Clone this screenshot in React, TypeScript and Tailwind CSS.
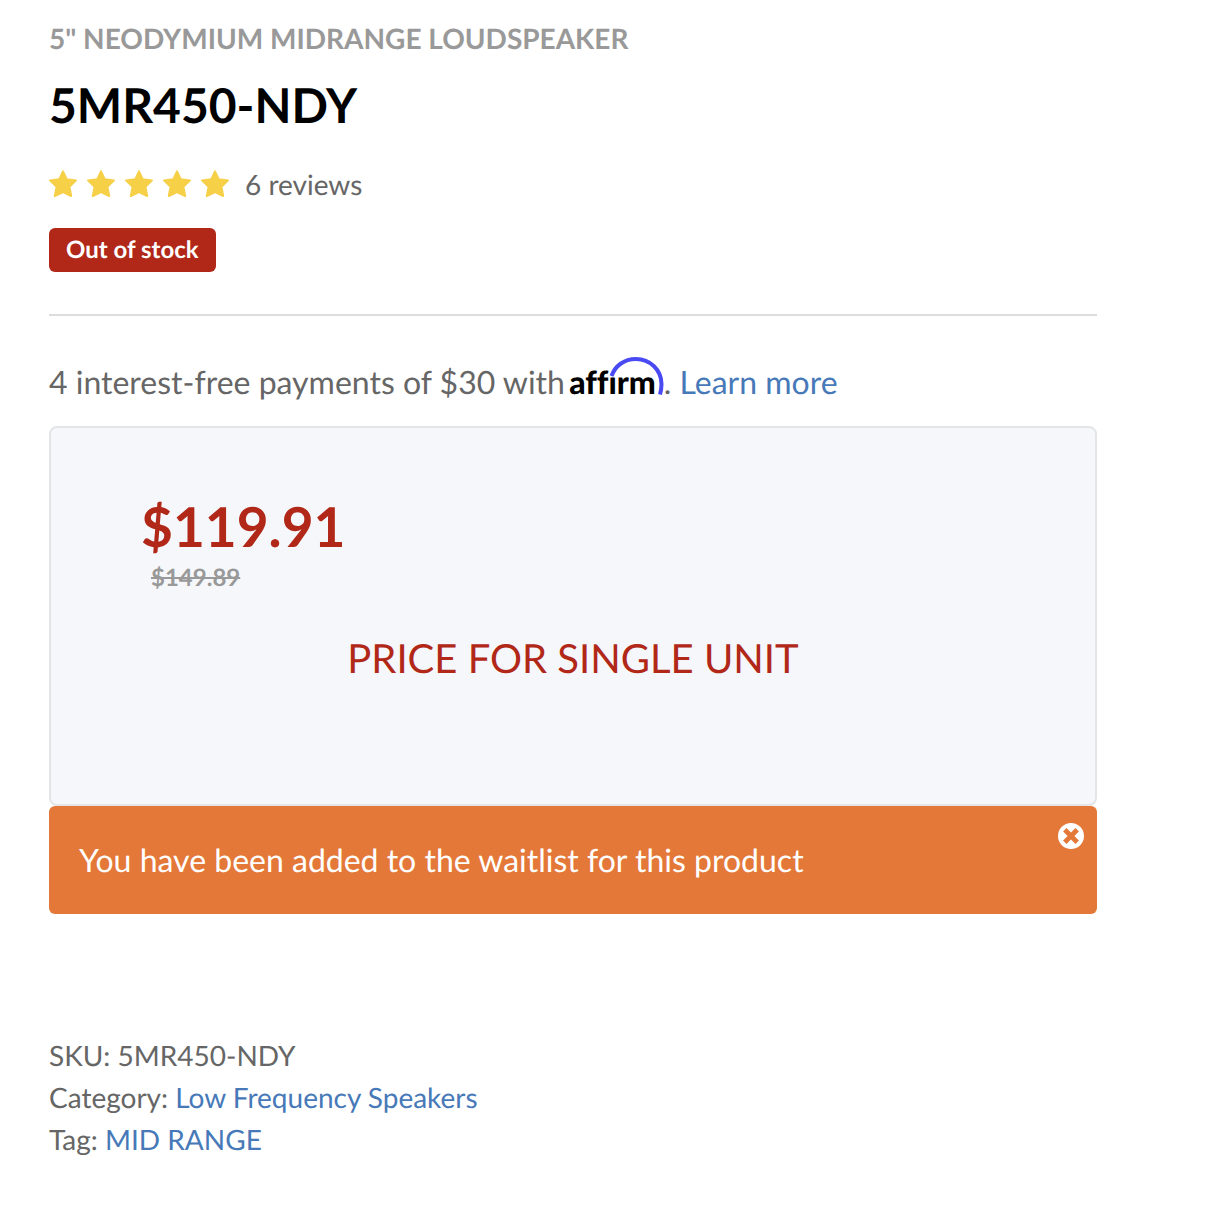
const Star = () => (
  <svg viewBox="0 0 28 28" className="size-7" fill="#f6d047" stroke="#f6d047" strokeWidth="2" strokeLinejoin="round" aria-hidden="true">
    <path d="M14 1.4L17.7 9.2L27 10.4L20.4 16.8L22.2 26L14 22L5.8 26L7.6 16.8L1 10.4L10.3 9.2Z" />
  </svg>
)

const CloseIcon = () => (
  <svg viewBox="0 0 26 26" className="size-[26px]" aria-hidden="true">
    <circle cx="13" cy="13" r="13" fill="currentColor" />
    <path d="M6.8 6.8L19.2 19.2M19.2 6.8L6.8 19.2" stroke="#e47838" strokeWidth="4.8" />
  </svg>
)

const AffirmLogo = () => (
  <span className="relative mr-2 -ml-1 inline-block text-[32px] leading-none font-black text-black [font-variant-ligatures:none]">
    affirm
    <svg viewBox="0 0 56 40" className="absolute -top-[10px] -right-2 h-10 w-14" fill="none" aria-hidden="true">
      <path d="M4 20L6.5 15" stroke="white" strokeWidth="9" />
      <path d="M3.5 20C7 10 16 3 28 3C42 3 53.5 14 53.5 28C53.5 32 53 35 52 38.5" stroke="#4a4af4" strokeWidth="4" />
    </svg>
  </span>
)

const meta = [
  { label: "Category:", value: "Low Frequency Speakers" },
  { label: "Tag:", value: "MID RANGE" },
]

export default function App() {
  return (
    <main className="min-h-screen bg-white pt-5 pr-[113px] pb-12 pl-[49px] font-['Lato',sans-serif] text-[#666] [text-rendering:geometricPrecision]">
      <p className="text-[28px] leading-9 font-bold text-[#999]">5" NEODYMIUM MIDRANGE LOUDSPEAKER</p>
      <h1 className="mt-5 text-5xl leading-[60px] font-bold text-black">5MR450-NDY</h1>

      <div className="mt-7 flex items-center gap-4">
        <div className="flex gap-[10px]" role="img" aria-label="5 out of 5 stars">
          {[1, 2, 3, 4, 5].map((n) => (
            <Star key={n} />
          ))}
        </div>
        <span className="text-[28px] leading-10">6 reviews</span>
      </div>

      <span className="mt-6 inline-block rounded-md bg-[#b12718] px-[17px] text-2xl leading-[44px] font-bold text-white">
        Out of stock
      </span>

      <hr className="mt-[42px] border-t-2 border-[#ddd]" />

      <p className="mt-[42px] text-[32px] leading-12">
        4 interest-free payments of $30 with <AffirmLogo />.{" "}
        <a href="#learn-more" className="text-[#4779b8]">Learn more</a>
      </p>

      <section className="mt-5 rounded-lg border-2 border-[#e4e5e6] bg-[#f5f7fa] px-[90px] pt-16 pb-[116px] text-[#b12718]">
        <p className="text-[55px] leading-[68px] font-bold">$119.91</p>
        <del className="ml-[10px] block text-2xl leading-9 font-bold text-[#999]">$149.89</del>
        <p className="mt-8 text-center text-[40px] leading-[60px]">PRICE FOR SINGLE UNIT</p>
      </section>

      <div role="status" className="flex items-start rounded-md bg-[#e47838] text-white">
        <p className="flex-1 py-[30px] pl-[30px] text-[32px] leading-12">
          You have been added to the waitlist for this product
        </p>
        <button type="button" aria-label="Dismiss" className="mt-[17px] mr-[13px]">
          <CloseIcon />
        </button>
      </div>

      <div className="mt-[120px] text-[28px] leading-[42px]">
        <p>SKU: 5MR450-NDY</p>
        {meta.map(({ label, value }) => (
          <p key={label}>
            {label} <a href="#catalog" className="text-[#4779b8]">{value}</a>
          </p>
        ))}
      </div>
    </main>
  )
}
